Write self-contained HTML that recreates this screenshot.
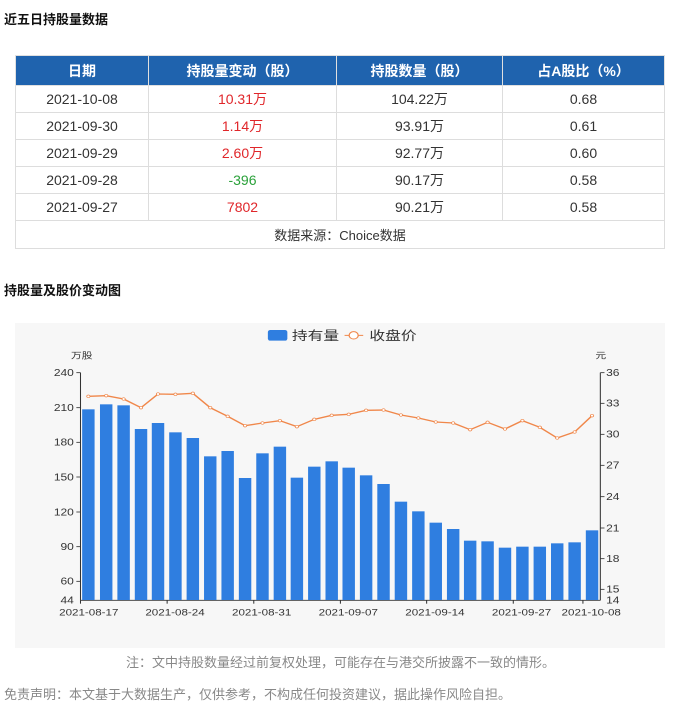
<!DOCTYPE html>
<html><head><meta charset="utf-8"><style>
*{margin:0;padding:0;box-sizing:border-box}
body{width:681px;height:707px;background:#fff;font-family:"Liberation Sans","Noto Sans CJK SC",sans-serif;position:relative;overflow:hidden;color:#333}
.h{position:absolute;left:4px;font-size:13px;font-weight:bold;color:#111}
table{position:absolute;left:15px;top:55px;width:650px;border-collapse:collapse;font-size:14px}
td,th{border:1px solid #ddd;text-align:center;height:27px;padding:0}
th{background:#1f63ae;color:#fff;font-weight:bold;height:30px;border-color:#e0e0e0}
.r{color:#e0262a}.g{color:#2aa13a}
.src{font-size:13px;height:28px;color:#333}
.note{position:absolute;font-size:13px;color:#888}
</style></head><body>
<div class="h" style="top:9px">近五日持股量数据</div>
<table>
<tr><th style="width:133px">日期</th><th style="width:188px">持股量变动（股）</th><th style="width:166px">持股数量（股）</th><th>占A股比（%）</th></tr>
<tr><td>2021-10-08</td><td class="r">10.31万</td><td>104.22万</td><td>0.68</td></tr>
<tr><td>2021-09-30</td><td class="r">1.14万</td><td>93.91万</td><td>0.61</td></tr>
<tr><td>2021-09-29</td><td class="r">2.60万</td><td>92.77万</td><td>0.60</td></tr>
<tr><td>2021-09-28</td><td class="g">-396</td><td>90.17万</td><td>0.58</td></tr>
<tr><td>2021-09-27</td><td class="r">7802</td><td>90.21万</td><td>0.58</td></tr>
<tr><td colspan="4" class="src">数据来源：Choice数据</td></tr>
</table>
<div class="h" style="top:280px">持股量及股价变动图</div>
<div style="position:absolute;left:15px;top:323px;width:650px;height:325px;background:#f7f7f7"></div>
<svg style="position:absolute;left:15px;top:320px" width="650" height="300" viewBox="0 0 1568 900" preserveAspectRatio="none" font-family="Liberation Sans, Noto Sans CJK SC, sans-serif">
<rect x="610" y="30" width="47" height="32" rx="6" fill="#2f7ee0"/>
<text x="668" y="60" font-size="38" fill="#333">持有量</text>
<line x1="795" y1="46" x2="840" y2="46" stroke="#f0874a" stroke-width="3"/>
<circle cx="817" cy="46" r="11" fill="#fff" stroke="#f0874a" stroke-width="3"/>
<text x="855" y="60" font-size="38" fill="#333">收盘价</text>
<text x="135" y="116" font-size="26" fill="#333">万股</text>
<text x="1400" y="116" font-size="26" fill="#333">元</text>
<g stroke="#333" stroke-width="2.5">
<line x1="158" y1="158" x2="158" y2="841"/><line x1="1412" y1="158" x2="1412" y2="841"/>
<line x1="158" y1="841" x2="1412" y2="841"/>
<line x1="148" y1="158" x2="158" y2="158"/><line x1="148" y1="263" x2="158" y2="263"/><line x1="148" y1="367" x2="158" y2="367"/><line x1="148" y1="471" x2="158" y2="471"/><line x1="148" y1="576" x2="158" y2="576"/><line x1="148" y1="680" x2="158" y2="680"/><line x1="148" y1="784" x2="158" y2="784"/>
<line x1="1412" y1="158" x2="1422" y2="158"/><line x1="1412" y1="250" x2="1422" y2="250"/><line x1="1412" y1="343" x2="1422" y2="343"/><line x1="1412" y1="436" x2="1422" y2="436"/><line x1="1412" y1="530" x2="1422" y2="530"/><line x1="1412" y1="624" x2="1422" y2="624"/><line x1="1412" y1="716" x2="1422" y2="716"/><line x1="1412" y1="808" x2="1422" y2="808"/>
<line x1="158" y1="841" x2="158" y2="851"/><line x1="367" y1="841" x2="367" y2="851"/><line x1="576" y1="841" x2="576" y2="851"/><line x1="785" y1="841" x2="785" y2="851"/><line x1="993" y1="841" x2="993" y2="851"/><line x1="1202" y1="841" x2="1202" y2="851"/><line x1="1370" y1="841" x2="1370" y2="851"/>
</g>
<g font-size="29" fill="#333" text-anchor="end">
<text x="142" y="168">240</text><text x="142" y="273">210</text><text x="142" y="377">180</text><text x="142" y="481">150</text><text x="142" y="586">120</text><text x="142" y="690">90</text><text x="142" y="794">60</text><text x="142" y="850">44</text>
</g>
<g font-size="29" fill="#333">
<text x="1426" y="168">36</text><text x="1426" y="260">33</text><text x="1426" y="353">30</text><text x="1426" y="446">27</text><text x="1426" y="540">24</text><text x="1426" y="634">21</text><text x="1426" y="726">18</text><text x="1426" y="818">15</text><text x="1426" y="850">14</text>
</g>
<g font-size="28" fill="#333" text-anchor="middle">
<text x="178" y="886">2021-08-17</text><text x="386" y="886">2021-08-24</text><text x="595" y="886">2021-08-31</text><text x="804" y="886">2021-09-07</text><text x="1013" y="886">2021-09-14</text><text x="1222" y="886">2021-09-27</text><text x="1390" y="886">2021-10-08</text>
</g>
<g fill="#2f7ee0">
<rect x="162" y="268" width="30" height="572"/><rect x="205" y="253" width="30" height="587"/><rect x="247" y="256" width="30" height="584"/><rect x="289" y="327" width="30" height="513"/><rect x="330" y="309" width="30" height="531"/><rect x="372" y="337" width="30" height="503"/><rect x="414" y="354" width="30" height="486"/><rect x="456" y="409" width="30" height="431"/><rect x="498" y="393" width="30" height="447"/><rect x="540" y="474" width="30" height="366"/><rect x="582" y="400" width="30" height="440"/><rect x="624" y="380" width="30" height="460"/><rect x="665" y="473" width="30" height="367"/><rect x="707" y="440" width="30" height="400"/><rect x="749" y="424" width="30" height="416"/><rect x="790" y="443" width="30" height="397"/><rect x="832" y="466" width="30" height="374"/><rect x="874" y="492" width="30" height="348"/><rect x="916" y="545" width="30" height="295"/><rect x="958" y="574" width="30" height="266"/><rect x="1000" y="608" width="30" height="232"/><rect x="1042" y="627" width="30" height="213"/><rect x="1083" y="662" width="30" height="178"/><rect x="1125" y="664" width="30" height="176"/><rect x="1167" y="683" width="30" height="157"/><rect x="1209" y="680" width="30" height="160"/><rect x="1251" y="680" width="30" height="160"/><rect x="1293" y="670" width="30" height="170"/><rect x="1335" y="667" width="30" height="173"/><rect x="1377" y="631" width="30" height="209"/>
</g>
<polyline fill="none" stroke="#f0874a" stroke-width="4" points="177,229 220,227 262,237 304,263 345,222 387,223 429,220 471,263 513,289 555,317 597,309 639,302 680,320 722,298 764,286 805,283 847,271 889,270 931,285 973,294 1015,306 1057,309 1098,329 1140,307 1182,327 1224,302 1266,322 1308,354 1350,336 1392,287"/>
<g fill="#fff" stroke="#f0874a" stroke-width="2">
<circle cx="177" cy="229" r="4"/><circle cx="220" cy="227" r="4"/><circle cx="262" cy="237" r="4"/><circle cx="304" cy="263" r="4"/><circle cx="345" cy="222" r="4"/><circle cx="387" cy="223" r="4"/><circle cx="429" cy="220" r="4"/><circle cx="471" cy="263" r="4"/><circle cx="513" cy="289" r="4"/><circle cx="555" cy="317" r="4"/><circle cx="597" cy="309" r="4"/><circle cx="639" cy="302" r="4"/><circle cx="680" cy="320" r="4"/><circle cx="722" cy="298" r="4"/><circle cx="764" cy="286" r="4"/><circle cx="805" cy="283" r="4"/><circle cx="847" cy="271" r="4"/><circle cx="889" cy="270" r="4"/><circle cx="931" cy="285" r="4"/><circle cx="973" cy="294" r="4"/><circle cx="1015" cy="306" r="4"/><circle cx="1057" cy="309" r="4"/><circle cx="1098" cy="329" r="4"/><circle cx="1140" cy="307" r="4"/><circle cx="1182" cy="327" r="4"/><circle cx="1224" cy="302" r="4"/><circle cx="1266" cy="322" r="4"/><circle cx="1308" cy="354" r="4"/><circle cx="1350" cy="336" r="4"/><circle cx="1392" cy="287" r="4"/>
</g>
</svg>
<div class="note" style="left:0;width:681px;text-align:center;top:652px">注：文中持股数量经过前复权处理，可能存在与港交所披露不一致的情形。</div>
<div class="note" style="left:4px;top:684px">免责声明：本文基于大数据生产，仅供参考，不构成任何投资建议，据此操作风险自担。</div>
</body></html>
